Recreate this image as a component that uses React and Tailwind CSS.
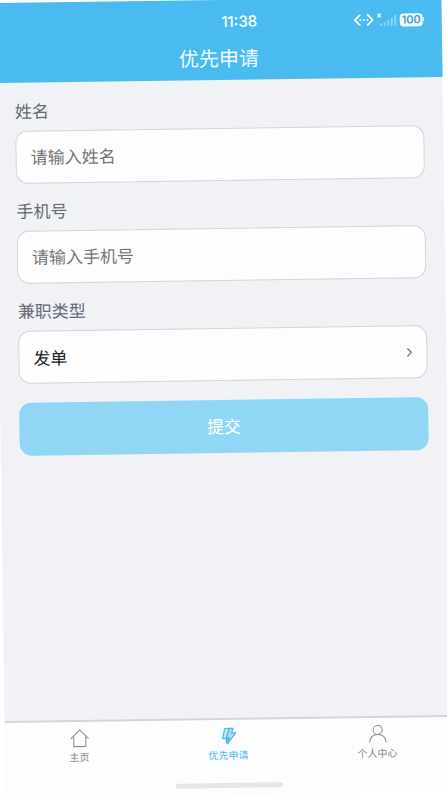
import { useState } from "react";

const HomeIcon = () => (
  <svg viewBox="0 0 20 20" className="w-5 h-5" fill="none" stroke="currentColor" strokeWidth="1">
    <path d="M1.2 10.8 L10 1.8 L18.8 10.8" />
    <path d="M4 8.5 V18.5 H16 V8.5" />
  </svg>
);

const BoltIcon = () => (
  <svg viewBox="0 0 20 20" className="w-5 h-5" stroke="currentColor" strokeWidth="1.2" strokeLinejoin="round">
    <path d="M6 2.5 H11 L9 8 H11 L7.5 17 L8 12.5 H3.8 Z" fill="#c3e6f8" />
    <path d="M10.5 2.5 H14.5 L12.8 7 H17 L8.6 18 L10.5 11.8 H7.5 Z" fill="#a5dbf6" />
  </svg>
);

const UserIcon = () => (
  <svg viewBox="0 0 20 20" className="w-5 h-5" fill="none" stroke="currentColor" strokeWidth="1">
    <circle cx="10" cy="6" r="4.5" />
    <path d="M1.8 18.5 C2.2 13.5 5.5 10.5 10 10.5 C14.5 10.5 17.8 13.5 18.2 18.5" />
  </svg>
);

const tabs = [
  { name: "主页", icon: HomeIcon },
  { name: "优先申请", icon: BoltIcon },
  { name: "个人中心", icon: UserIcon },
];

const StatusBar = () => (
  <div className="grid grid-cols-[1fr_auto_1fr] items-center h-10 pt-1 pr-[18px] text-white">
    <span />
    <span className="pl-15 font-['Inter',sans-serif] text-[15px] leading-5 font-medium">11:38</span>
    <div className="flex items-center justify-end gap-[3px]">
      <svg viewBox="0 0 20 12" className="w-5 h-3" fill="none" stroke="currentColor" strokeWidth="1.8" strokeLinecap="round" strokeLinejoin="round">
        <path d="M6 1 L1.2 6 L6 11 M14 1 L18.8 6 L14 11" />
        <path d="M6.5 6 H6.6 M10 6 H10.1 M13.5 6 H13.6" strokeWidth="1.8" />
      </svg>
      <svg viewBox="0 0 20 14" className="w-5 h-[14px]" fill="none" stroke="currentColor">
        <path d="M0.8 1 L4.2 4.6 M4.2 1 L0.8 4.6" strokeWidth="1.3" />
        <path d="M4.5 13 V11 M8 13 V9.5 M11.5 13 V7.5 M15 13 V5 M18.5 13 V2.5" strokeWidth="1.8" opacity="0.4" />
      </svg>
      <div className="flex items-center">
        <span className="px-[2px] rounded-[4px] bg-[#f0fbff] text-[#4a9fc8] font-['Inter',sans-serif] text-[11px] leading-[13px] font-semibold">
          100
        </span>
        <span className="w-px h-1 bg-[#f0fbff]" />
      </div>
    </div>
  </div>
);

const App = () => {
  const [name, setName] = useState("");
  const [phone, setPhone] = useState("");
  const [type, setType] = useState("发单");
  const [activeTab, setActiveTab] = useState("优先申请");

  return (
    <div className="min-h-screen overflow-hidden bg-white font-['Noto_Sans_CJK_SC',sans-serif]">
      {/* the whole screen is slightly tilted */}
      <div className="flex flex-col min-h-screen rotate-[-0.8deg] bg-[#f0f2f5]">
        <header className="h-20 bg-[#4abbf0]">
          <StatusBar />
          <h1 className="text-center text-xl leading-9 text-[#f0fbff]">优先申请</h1>
        </header>

        <main className="flex-1 px-[19px] pt-4">
          <form className="flex flex-col gap-[15px]" onSubmit={(e) => e.preventDefault()}>
            <div>
              <label htmlFor="name" className="block mb-2 text-[17px] leading-6 text-[#666a78]">
                姓名
              </label>
              <input
                id="name"
                type="text"
                value={name}
                onChange={(e) => setName(e.target.value)}
                placeholder="请输入姓名"
                className="block w-full h-[53px] px-[14px] pb-[2px] rounded-xl border border-[#d3d5d8] bg-[#fdfdfd] text-[17px] text-[#222] placeholder:text-[#757575] outline-none"
              />
            </div>

            <div>
              <label htmlFor="phone" className="block mb-2 text-[17px] leading-6 text-[#666a78]">
                手机号
              </label>
              <input
                id="phone"
                type="tel"
                value={phone}
                onChange={(e) => setPhone(e.target.value)}
                placeholder="请输入手机号"
                className="block w-full h-[53px] px-[14px] pb-[2px] rounded-xl border border-[#d3d5d8] bg-[#fdfdfd] text-[17px] text-[#222] placeholder:text-[#757575] outline-none"
              />
            </div>

            <div>
              <label htmlFor="type" className="block mb-2 text-[17px] leading-6 text-[#666a78]">
                兼职类型
              </label>
              <div className="relative">
                <select
                  id="type"
                  value={type}
                  onChange={(e) => setType(e.target.value)}
                  className="block w-full h-[53px] px-[14px] rounded-xl border border-[#d3d5d8] bg-[#fdfdfd] text-[17px] text-[#222] appearance-none outline-none"
                >
                  <option value="发单">发单</option>
                </select>
                <svg
                  viewBox="0 0 8 12"
                  className="absolute right-[14px] inset-y-0 my-auto w-2 h-3 pointer-events-none"
                  fill="none"
                  stroke="#777"
                  strokeWidth="1.3"
                >
                  <path d="M2 2 L6 6 L2 10" />
                </svg>
              </div>
            </div>

            <button type="submit" className="mt-1 pb-[2px] w-full h-[53px] rounded-xl bg-[#90d7f6] text-[17px] text-white">
              提交
            </button>
          </form>
        </main>

        <footer className="border-t-2 border-[#d3d5d8] bg-[#fdfdfd]">
          <nav className="grid grid-cols-3 pt-[6px]">
            {tabs.map(({ name, icon: Icon }) => (
              <button
                key={name}
                type="button"
                onClick={() => setActiveTab(name)}
                className={`flex flex-col items-center gap-px text-[10px] leading-4 ${
                  activeTab === name ? "text-[#4db8ea]" : "text-[#888]"
                }`}
              >
                <Icon />
                {name}
              </button>
            ))}
          </nav>
          <div className="mx-auto mt-5 mb-[6px] w-[108px] h-[5px] rounded-full bg-[#e6e6e6]" />
        </footer>
      </div>
    </div>
  );
};

export default App;
